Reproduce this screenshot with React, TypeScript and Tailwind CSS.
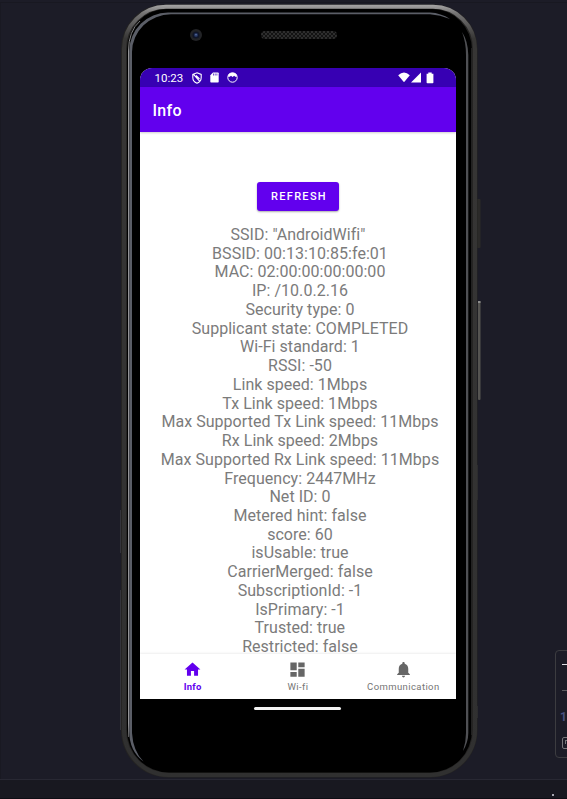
import React from "react";

const details: string[] = [
  'SSID: "AndroidWifi"',
  " BSSID: 00:13:10:85:fe:01",
  " MAC: 02:00:00:00:00:00",
  " IP: /10.0.2.16",
  " Security type: 0",
  " Supplicant state: COMPLETED",
  " Wi-Fi standard: 1",
  " RSSI: -50",
  " Link speed: 1Mbps",
  " Tx Link speed: 1Mbps",
  " Max Supported Tx Link speed: 11Mbps",
  " Rx Link speed: 2Mbps",
  " Max Supported Rx Link speed: 11Mbps",
  " Frequency: 2447MHz",
  " Net ID: 0",
  " Metered hint: false",
  " score: 60",
  " isUsable: true",
  " CarrierMerged: false",
  " SubscriptionId: -1",
  " IsPrimary: -1",
  " Trusted: true",
  " Restricted: false",
];

// Device hardware: metal rim, glass, camera, speaker and side keys.
function PhoneBody() {
  return (
    <svg className="absolute inset-0" width="362" height="775" viewBox="119 4 362 775" fill="none">
      <defs>
        <linearGradient id="rim" x1="0" y1="4" x2="0" y2="778" gradientUnits="userSpaceOnUse">
          <stop offset="0" stopColor="#aaa9a9" />
          <stop offset="0.012" stopColor="#757474" />
          <stop offset="0.045" stopColor="#373635" />
          <stop offset="1" stopColor="#303030" />
        </linearGradient>
        <linearGradient id="edge" x1="0" y1="10" x2="0" y2="745" gradientUnits="userSpaceOnUse">
          <stop offset="0" stopColor="#777" />
          <stop offset="0.06" stopColor="#a4a4a7" />
          <stop offset="0.97" stopColor="#a4a4a7" />
          <stop offset="1" stopColor="#333" />
        </linearGradient>
        <pattern id="mesh" width="4" height="4" patternUnits="userSpaceOnUse">
          <rect width="4" height="4" fill="#131313" />
          <path d="M0 0l4 4M4 0L0 4" stroke="#353535" strokeWidth="0.8" />
        </pattern>
      </defs>
      <rect x="476.500" y="199" width="4" height="49" rx="1" fill="#2b2a29" />
      <rect x="478" y="301" width="2.500" height="99" rx="1" fill="#555451" />
      <rect x="478" y="301" width="2.500" height="2" fill="#8d8d8c" />
      <path d="M120.500 510v43M120.500 590v140M477.500 465v35M477.500 706v12" stroke="#34343b" />
      <path d="M121 49A44 44 0 0 1 165.500 4.500H433A44.500 44 0 0 1 477.500 49V730A47 47 0 0 1 430 777.500H168.500A47 47 0 0 1 121 730Z" fill="#252423" />
      <path d="M124 49A42 42.300 0 0 1 166 6.700H433A42 42.300 0 0 1 475 49V730A45 45 0 0 1 430 775H169A45 45 0 0 1 124 730Z" stroke="url(#rim)" strokeWidth="4" />
      <path d="M127 50A40 41 0 0 1 167 9H432A40 41 0 0 1 472 50V730A42 42 0 0 1 430 772.500H169A42 42 0 0 1 127 730Z" fill="#000" />
      <path d="M128.500 737V51Q128.500 31 140 21" stroke="url(#edge)" strokeWidth="0.900" />
      <path d="M129.200 51A39 39 0 0 1 168 12.500H430Q441 13 450 19Q440 15 430 14.300H171A39 38 0 0 0 132 52V733Q133 751 143.500 761.500Q129.200 751 129.200 731Z" fill="#5b5e67" />
      <path d="M462 32Q466 42 466 55V733Q466 742 463 751Q468.300 742 468.300 733V55Q468 41 462 32Z" fill="#4f5054" />
      <path d="M471.500 48V735" stroke="#222" strokeWidth="1" />
      <circle cx="196" cy="35" r="6" fill="#222326" />
      <circle cx="196" cy="35" r="3.600" fill="#101527" />
      <circle cx="196" cy="35" r="2" fill="#24355f" />
      <circle cx="196" cy="34.700" r="0.800" fill="#6578a8" />
      <rect x="261" y="31" width="76" height="8" rx="4" fill="url(#mesh)" />
    </svg>
  );
}

function StatusBar() {
  return (
    <div className="flex h-[19px] shrink-0 items-center bg-[#3700b3] pl-[14.5px] pr-[22px] text-white">
      <span className="w-[28.5px] pt-[2px] text-[11.5px] leading-none">10:23</span>
      <svg className="ml-[8.500px]" width="10" height="12" viewBox="0 0 10 12" fill="none" stroke="white" strokeWidth="1.100">
        <path d="M5 .8L9.200 2.400V5.500Q9.200 9.600 5 11.200Q.8 9.600 .8 5.500V2.400ZM1.300 2.200L8 9.700M4 3.500L7.500 7" />
      </svg>
      <svg className="ml-[8.500px]" width="9" height="11" viewBox="0 0 9 11">
        <path d="M3 .5H8Q8.700 .5 8.700 1.200V9.800Q8.700 10.500 8 10.500H1Q.3 10.500 .3 9.800V3.200Z" fill="white" />
        <path d="M3.500 1.500V3.500M5.200 1.500V3.500M6.900 1.500V3.500" stroke="#3700b3" strokeWidth=".7" />
      </svg>
      <svg className="ml-[8px]" width="11" height="11" viewBox="0 0 11 11" fill="none">
        <circle cx="5.500" cy="5.500" r="4.700" stroke="white" strokeWidth="1" />
        <path d="M1.200 2.800Q2 .8 5.500 .8T9.800 2.800V4.800H8.200L7.200 3.700L5.500 5L4 3.700L2.800 4.800H1.200Z" fill="white" />
      </svg>
      <div className="ml-auto flex items-center">
        <svg width="12" height="11" viewBox="0 0 12 11">
          <path d="M.2 3.200Q6-2.100 11.800 3.200L6 10.300Z" fill="white" />
        </svg>
        <svg className="ml-px" width="10" height="11" viewBox="0 0 10 11">
          <path d="M10 .5V10.500H0Z" fill="white" />
        </svg>
        <svg className="ml-[5px]" width="8" height="12" viewBox="0 0 8 12">
          <path d="M2.300 .5H5.700V1.700H7.400V10.500Q7.400 11.300 6.600 11.300H1.400Q.6 11.300 .6 10.500V1.700H2.300Z" fill="white" />
        </svg>
      </div>
    </div>
  );
}

function NavItem({ label, active, path }: { label: string; active?: boolean; path: string }) {
  return (
    <div className={active ? "flex flex-1 flex-col items-center pt-[6px] text-[#6200ee]" : "flex flex-1 flex-col items-center pt-[6px] text-[#666]"}>
      <svg width="19" height="19" viewBox="0 0 24 24" fill="currentColor">
        <path d={path} />
      </svg>
      <span className={active ? "mt-[2px] text-[9.5px] leading-[12px] font-bold tracking-[0.2px]" : "mt-[2px] text-[9.5px] leading-[12px] tracking-[0.4px] text-[#757575]"}>
        {label}
      </span>
    </div>
  );
}

export default function App() {
  return (
    <div className="flex h-[799px] w-[567px] flex-col overflow-hidden bg-[#1c1c27] font-[Roboto,sans-serif] antialiased">
      <div className="h-[3px] shrink-0 border-b border-[#181821]" />
      <main className="flex h-[776px] shrink-0 border-l border-[#191922]">
        <div className="relative ml-[118px] mt-px h-[775px] w-[362px] shrink-0">
          <PhoneBody />
          <div className="relative ml-[21px] mt-[64px] flex h-[631px] w-[316px] flex-col overflow-hidden rounded-t-[12px] bg-white">
            <StatusBar />
            <header className="z-10 flex h-[45px] shrink-0 items-center bg-[#6200ee] pl-[12.5px] pt-[2px] text-[16px] font-medium tracking-[0.3px] text-white shadow-[0_1px_2px_#0003]">
              Info
            </header>
            <section className="flex h-[522px] shrink-0 flex-col items-center pt-[50px]">
              <button className="h-[29px] w-[82px] shrink-0 rounded-[3px] bg-[#6200ee] pl-[2px] pt-[2px] text-[11px] font-medium tracking-[1.3px] text-white shadow-[0_1px_2px_#0005]">
                REFRESH
              </button>
              <div className="mt-[15px] text-center text-[16px] leading-[18.740px] tracking-[0.04px] whitespace-pre text-[#7b7b7b]">
                {details.map((line) => (
                  <div key={line}>{line}</div>
                ))}
              </div>
            </section>
            <nav className="z-10 flex h-[45px] shrink-0 bg-white shadow-[0_-1px_2px_#00000012]">
              <NavItem label="Info" active path="M10 20v-6h4v6h5v-8h3L12 3 2 12h3v8z" />
              <NavItem label="Wi-fi" path="M3 13h8V3H3v10zm0 8h8v-6H3v6zm10 0h8V11h-8v10zm0-18v6h8V3h-8z" />
              <NavItem
                label="Communication"
                path="M12 22c1.100 0 2-.9 2-2h-4c0 1.100.890 2 2 2zm6-6v-5c0-3.070-1.640-5.640-4.500-6.320V4c0-.830-.670-1.500-1.500-1.500s-1.500.670-1.500 1.500v.680C7.630 5.360 6 7.920 6 11v5l-2 2v1h16v-1l-2-2z"
              />
            </nav>
          </div>
          <div className="relative ml-[135px] mt-[8px] h-[3px] w-[87px] rounded-full bg-[#f3f3f3]" />
        </div>
        <aside className="-mr-3 ml-auto mt-[647px] flex h-[108px] w-[24px] shrink-0 flex-col rounded-[4px] border border-[#3c3c40] pl-[6px]">
          <div className="mt-[13px] h-px w-4 shrink-0 bg-[#dedee2]" />
          <div className="mt-[25px] h-px w-4 shrink-0 bg-[#5b5b5f]" />
          <span className="-ml-[2px] mt-[20px] h-[13px] text-[12px] leading-[13px] font-bold text-[#4a5280]">1</span>
          <div className="mt-[13px] flex h-[12px] w-4 shrink-0 rounded-[2px] border border-[#77777b] pl-[2px] pt-[2px]">
            <div className="h-1 w-3 border-t border-l border-[#77777b]" />
          </div>
        </aside>
      </main>
      <footer className="flex h-[20px] shrink-0 justify-end border-t border-b border-t-[#282833] border-b-[#0d0d14] bg-[#181820] pr-[13px] pt-[14px]">
        <div className="size-[2px] bg-[#a5a5b0]" />
      </footer>
    </div>
  );
}
